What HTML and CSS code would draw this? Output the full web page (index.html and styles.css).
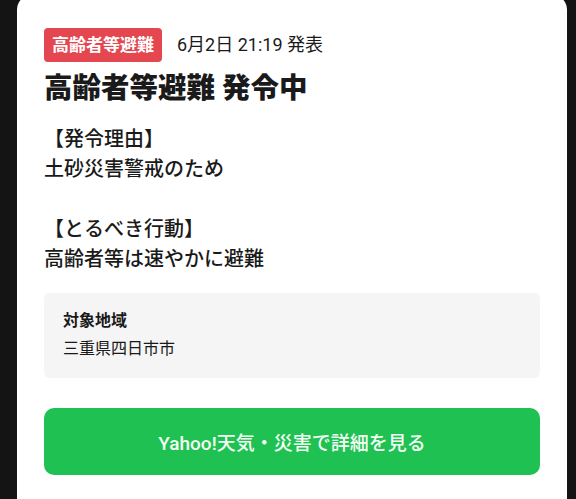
FILE: index.html
```html
<!DOCTYPE html>
<html lang="ja">
<head>
  <meta charset="UTF-8">
  <meta name="viewport" content="width=device-width, initial-scale=1.0">
  <title>高齢者等避難 発令中</title>
  <link rel="stylesheet" href="styles.css">
</head>
<body>
  <div class="alert-card">
    <!-- Header: level badge and issue time -->
    <div class="alert-header">
      <span class="level-badge">高齢者等避難</span>
      <span class="issued-at">6月2日 21:19 発表</span>
    </div>

    <h1 class="alert-title">高齢者等避難 発令中</h1>

    <div class="alert-body">
      <p>【発令理由】<br>土砂災害警戒のため</p>
      <p>【とるべき行動】<br>高齢者等は速やかに避難</p>
    </div>

    <!-- Target area -->
    <div class="area-box">
      <div class="area-label">対象地域</div>
      <div class="area-name">三重県四日市市</div>
    </div>

    <button class="detail-btn">Yahoo!天気・災害で詳細を見る</button>
  </div>
</body>
</html>
```

FILE: styles.css
```css
body {
  margin: 0;
  background-color: #141414;
  font-family: "Roboto", "Noto Sans CJK JP", sans-serif;
  color: #1a1a1a;
  overflow: hidden;
}
.alert-card {
  margin: -6px 9px 0 17px;
  padding: 34px 27px 40px;
  background-color: #fff;
  border-radius: 16px;
  display: flex;
  flex-direction: column;
}
.alert-header {
  display: flex;
  align-items: center;
  gap: 15px;
}
.level-badge {
  background-color: #e4474f;
  color: #fff;
  font-weight: 700;
  font-size: 17px;
  line-height: 24px;
  padding: 5px 8px;
  border-radius: 4px;
}
.issued-at {
  font-size: 18px;
  line-height: 24px;
}
.alert-title {
  margin: 8px 0 0;
  font-size: 28.5px;
  line-height: 38px;
  font-weight: 900;
}
.alert-body {
  margin-top: 16px;
}
.alert-body p {
  margin: 0 0 30px;
  font-size: 20px;
  line-height: 30px;
  font-weight: 500;
}
.alert-body p:last-child {
  margin-bottom: 0;
}
.area-box {
  margin-top: 19px;
  background-color: #f5f5f5;
  border-radius: 6px;
  padding: 14px 19px 15px;
  font-size: 16px;
  line-height: 28px;
}
.area-label {
  font-weight: 700;
}
.detail-btn {
  margin-top: 30px;
  height: 67px;
  border: none;
  border-radius: 10px;
  background-color: #1fc152;
  color: #f4fff4;
  font-family: inherit;
  font-size: 19px;
  font-weight: 500;
  cursor: pointer;
}
```
